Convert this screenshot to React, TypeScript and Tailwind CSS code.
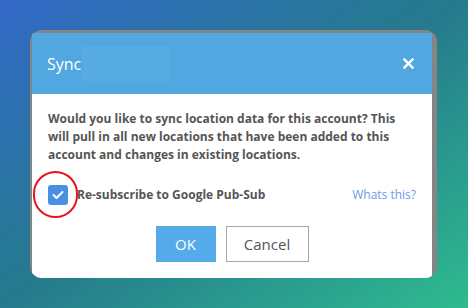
export default function App() {
  return (
    <div
      className="w-[468px] h-[308px] pl-[30px] pt-[30px] bg-linear-to-br from-[#3368c8] via-[#267a8c] to-[#2fbb8e]"
      style={{ fontFamily: '"Open Sans", "Liberation Sans", sans-serif' }}
    >
      <div className="w-[407px] h-[248px] rounded-[12px] overflow-hidden bg-[#858585] flex flex-col pl-[2px] pr-[5px] pt-[3px]">
        <div className="flex-1 flex flex-col bg-white">
          {/* Header */}
          <div className="h-[61px] bg-[#52a7e0] flex items-center pl-[15px] pr-[18px]">
            <span className="text-[16px] text-white font-normal leading-none">Sync</span>
            <div className="ml-[1px] w-[88px] h-[35px] bg-[#58ace4] blur-[1px]" />
            <button className="ml-auto text-white">
              <svg width="11" height="11" viewBox="0 0 11 11">
                <path d="M1.5 1.5 L9.5 9.5 M9.5 1.5 L1.5 9.5" stroke="white" strokeWidth="2.4" strokeLinecap="square" />
              </svg>
            </button>
          </div>

          {/* Body */}
          <div className="px-[16px] pt-[16px]">
            <p className="text-[12px] leading-[18px] font-bold text-[#555555]">
              Would you like to sync location data for this account? This will pull in all new locations that have been added to this account and changes in existing locations.
            </p>

            <div className="mt-[21px] flex items-center">
              <div className="relative w-[20px] h-[20px] rounded-[3px] bg-[#4a90e2] flex items-center justify-center">
                <svg width="12" height="10" viewBox="0 0 12 10">
                  <path d="M1.5 5 L4.5 8 L10.5 2" stroke="white" strokeWidth="2" fill="none" strokeLinecap="round" strokeLinejoin="round" />
                </svg>
                <div className="absolute left-[-15px] top-[-14px] w-[45px] h-[47px] rounded-full border-2 border-[#e8141b]" />
              </div>
              <span className="ml-[9px] text-[12px] font-bold text-[#555555]">Re-subscribe to Google Pub-Sub</span>
              <a className="ml-auto text-[12px] text-[#6e9be8]">Whats this?</a>
            </div>

            <div className="mt-[21px] flex justify-center gap-[10px]">
              <button className="w-[60px] h-[36px] bg-[#55aaea] text-white text-[15px]">OK</button>
              <button className="w-[83px] h-[36px] bg-white border border-[#a2a8b0] text-[#555555] text-[15px]">Cancel</button>
            </div>
          </div>
        </div>
      </div>
    </div>
  );
}
